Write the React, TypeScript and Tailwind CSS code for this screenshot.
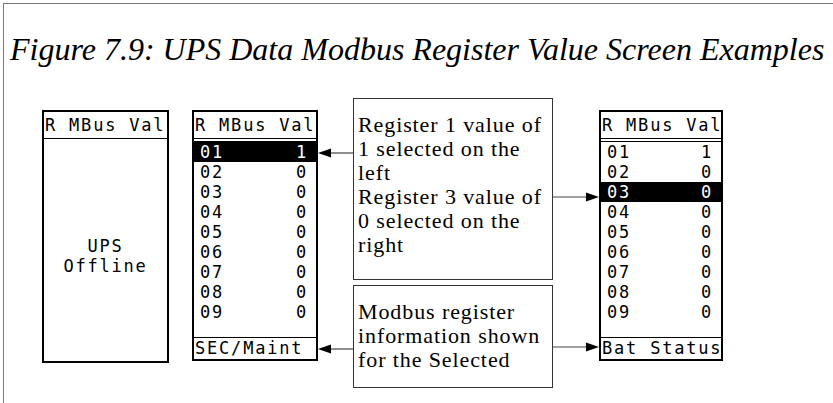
const lcd = "font-['DejaVu_Sans_Mono',monospace] text-[17px] tracking-[1.8px] leading-none whitespace-nowrap";

const rows = ['01', '02', '03', '04', '05', '06', '07', '08', '09'];

const ArrowLeft = ({ w, top }: { w: number; top: string }) => (
    <svg width={w} height={12} className={`shrink-0 ${top}`}>
        <line x1={10} y1={6} x2={w} y2={6} stroke="#444" strokeWidth={1.2} />
        <polygon points="0,6 13,1.5 13,10.5" fill="#000" />
    </svg>
);

const ArrowRight = ({ w, top }: { w: number; top: string }) => (
    <svg width={w} height={12} className={`shrink-0 ${top}`}>
        <line x1={0} y1={6} x2={w - 10} y2={6} stroke="#444" strokeWidth={1.2} />
        <polygon points={`${w},6 ${w - 13},1.5 ${w - 13},10.5`} fill="#000" />
    </svg>
);

const Header = () => (
    <div className="flex h-[27px] items-center overflow-hidden border-b border-black pl-[1px]">R MBus Val</div>
);

const RegisterScreen = ({ selected, footer, width }: { selected: number; footer: string; width: string }) => (
    <div className={`${lcd} mt-[12px] flex ${width} shrink-0 flex-col border-2 border-black bg-white text-black`}>
        <Header />
        <div className="mt-[2px] border-t border-black" />
        <div className="flex h-[195px] flex-col">
            {rows.map((r, i) => (
                <div
                    key={r}
                    className={`flex h-[20px] items-center justify-between pr-[8px] pl-[6px] ${
                        i === selected ? 'bg-black text-white' : ''
                    }`}
                >
                    <span>{r}</span>
                    <span>{i === 0 ? '1' : '0'}</span>
                </div>
            ))}
        </div>
        <div className="flex h-[22px] items-center overflow-hidden border-t border-black pl-[1px]">{footer}</div>
    </div>
);

const Callout = ({ lines, box }: { lines: string[]; box: string }) => (
    <div
        className={`w-[200px] shrink-0 border border-[#333] bg-white px-[4px] font-['Liberation_Serif',serif] text-[22px] leading-[24px] tracking-[0.9px] text-black ${box}`}
    >
        {lines.map((l) => (
            <div key={l} className="whitespace-nowrap">
                {l}
            </div>
        ))}
    </div>
);

export default function App() {
    return (
        <div className="h-[403px] w-[833px] overflow-hidden bg-white">
            <div className="mt-[3px] ml-[3px] h-[420px] border-t border-l border-[#7a7a7a]">
                <div className="pt-[29px] pl-[6px] font-['Liberation_Serif',serif] text-[32px] leading-[32px] whitespace-nowrap text-black italic">
                    Figure 7.9: UPS Data Modbus Register Value Screen Examples
                </div>

                <div className="mt-[33px] flex items-start pl-[38px]">
                    {/* Offline screen */}
                    <div className={`${lcd} mt-[12px] flex h-[253px] w-[127px] shrink-0 flex-col border-2 border-black text-black`}>
                        <Header />
                        <div className="flex flex-1 flex-col items-center justify-center pt-[12px] leading-[20px]">
                            <span>UPS</span>
                            <span>Offline</span>
                        </div>
                    </div>

                    <div className="ml-[23px]">
                        <RegisterScreen selected={0} footer="SEC/Maint" width="w-[126px]" />
                    </div>

                    {/* Callouts */}
                    <div className="flex flex-col gap-[5px]">
                        <div className="flex items-start">
                            <ArrowLeft w={35} top="mt-[49px]" />
                            <Callout
                                box="h-[182px] pt-[14px]"
                                lines={[
                                    'Register 1 value of',
                                    '1 selected on the',
                                    'left',
                                    'Register 3 value of',
                                    '0 selected on the',
                                    'right',
                                ]}
                            />
                            <ArrowRight w={46} top="mt-[93px]" />
                        </div>
                        <div className="flex items-start">
                            <ArrowLeft w={35} top="mt-[58px]" />
                            <Callout
                                box="h-[103px] pt-[14px]"
                                lines={['Modbus register', 'information shown', 'for the Selected']}
                            />
                            <ArrowRight w={46} top="mt-[56px]" />
                        </div>
                    </div>

                    <RegisterScreen selected={2} footer="Bat Status" width="w-[124px]" />
                </div>
            </div>
        </div>
    );
}
